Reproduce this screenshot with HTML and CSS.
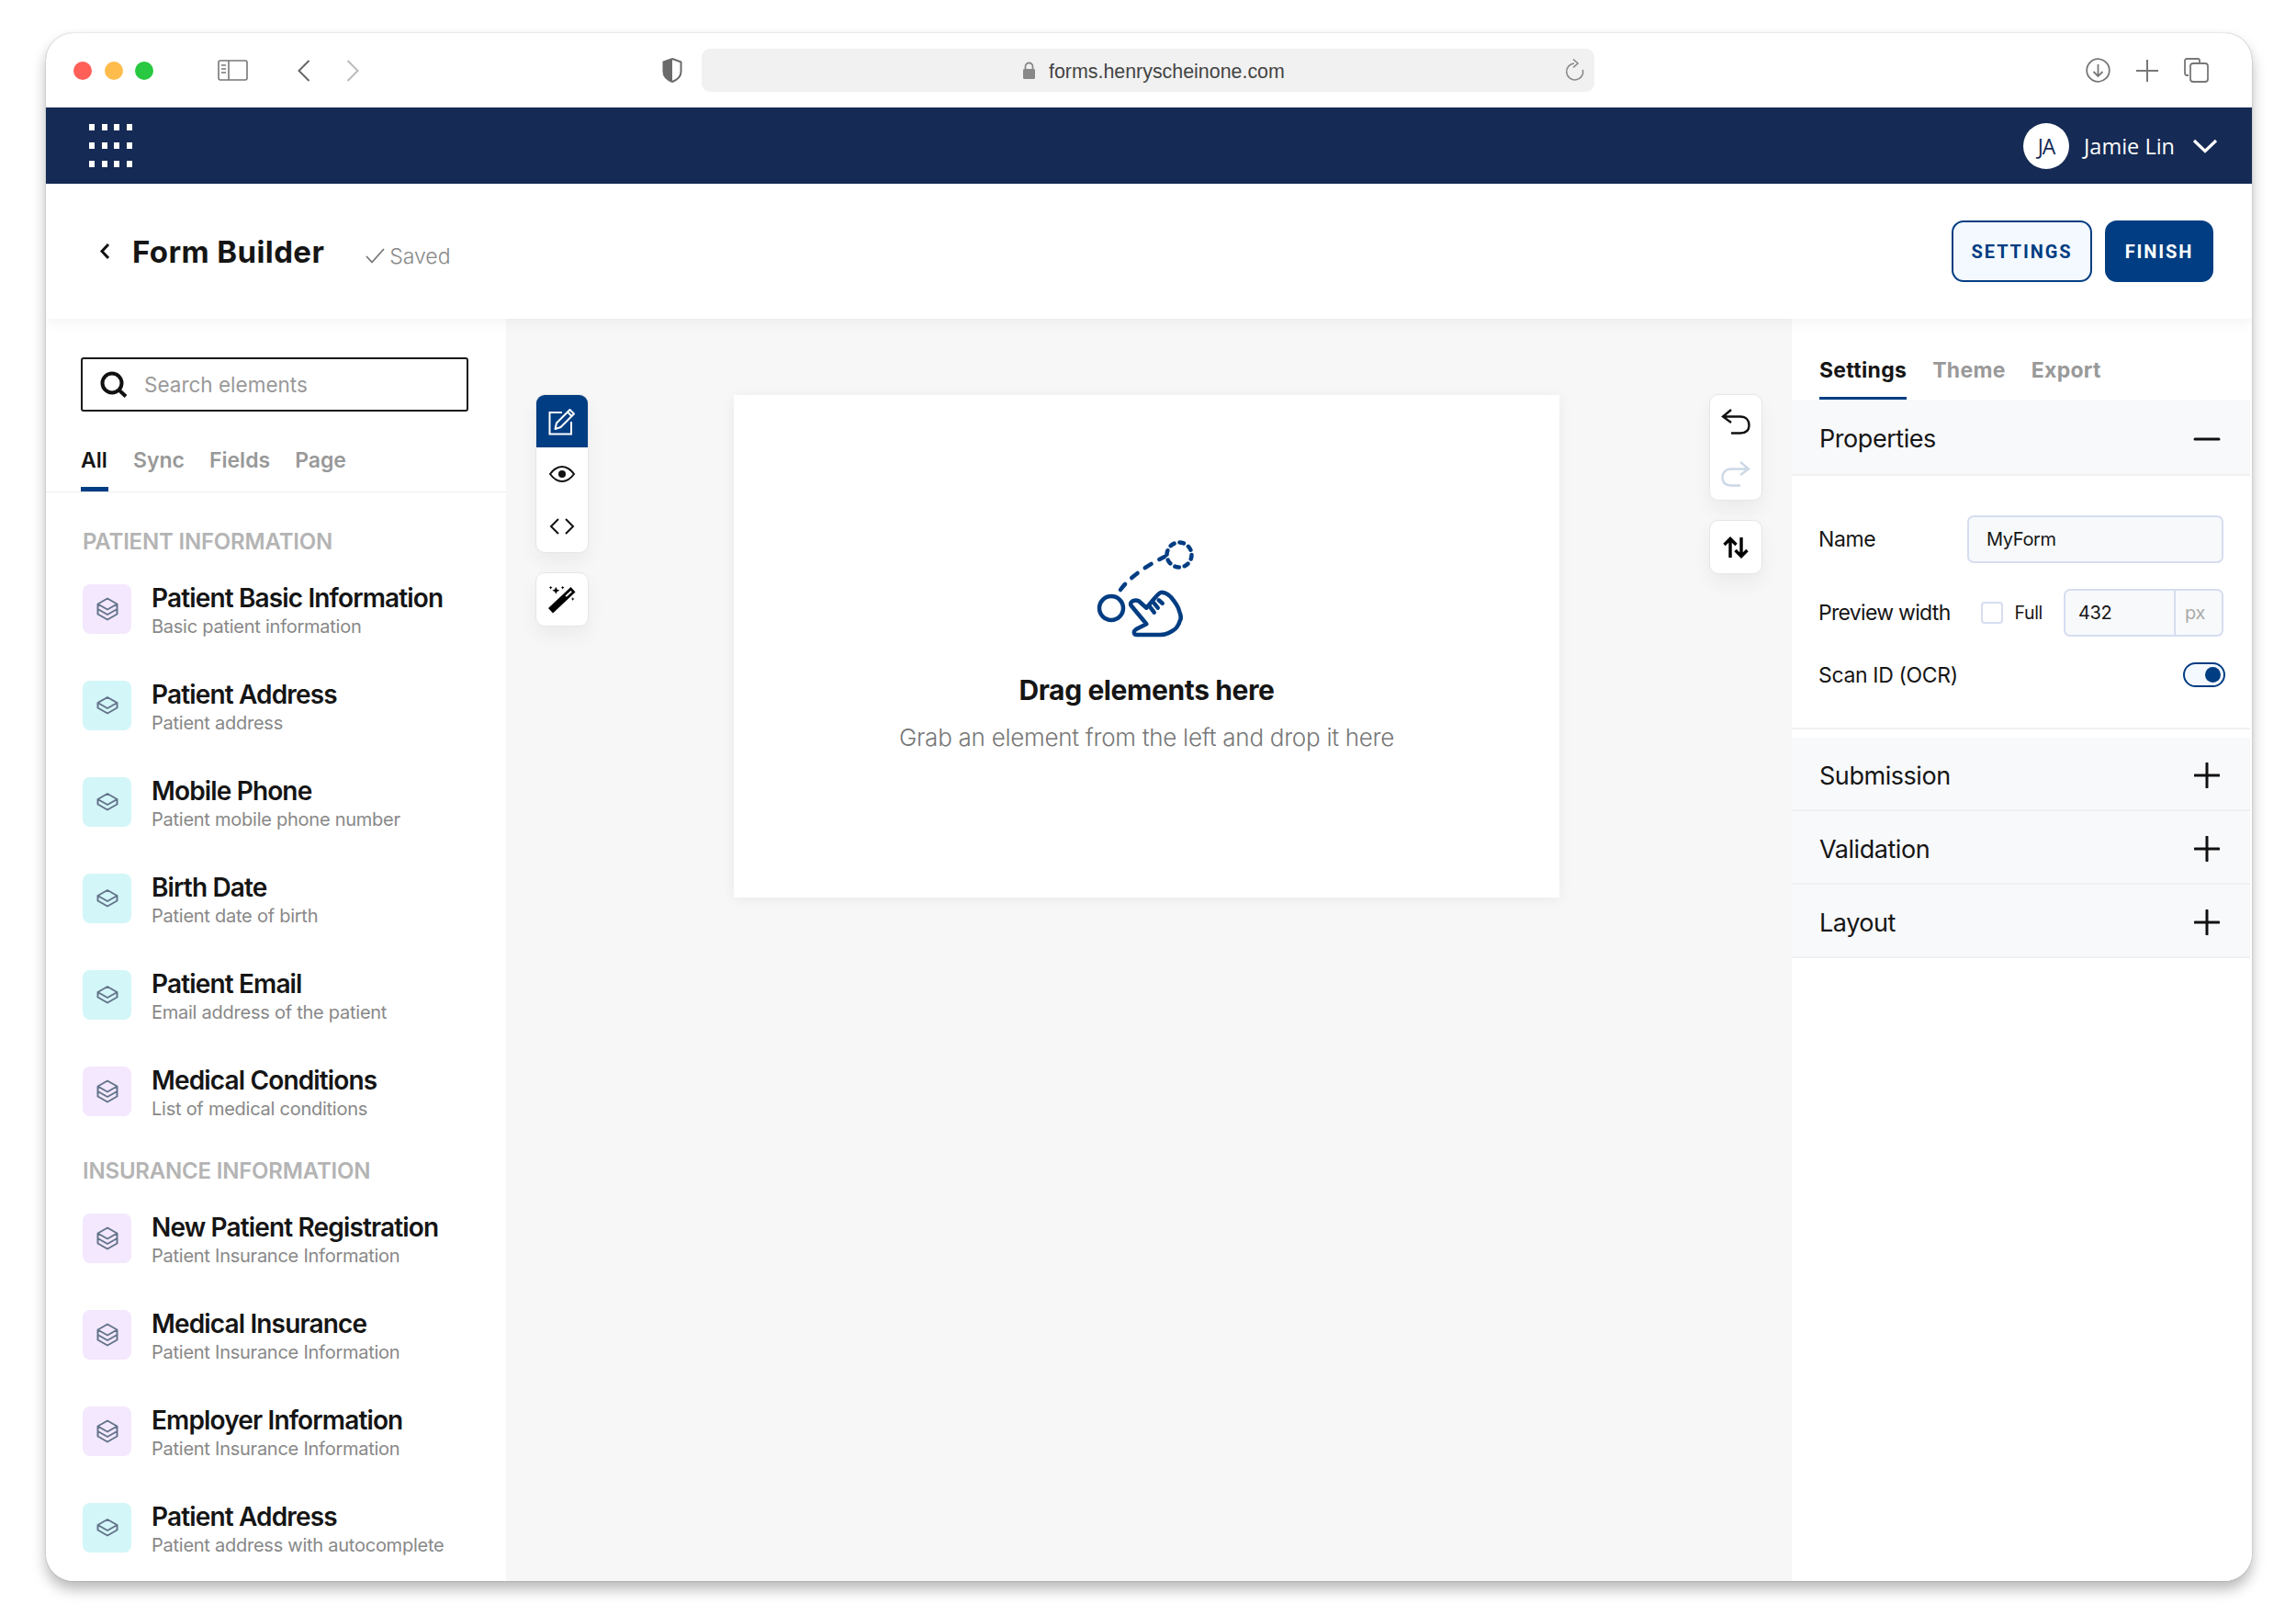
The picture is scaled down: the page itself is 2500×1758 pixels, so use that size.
FILE: index.html
```html
<!DOCTYPE html>
<html lang="en">
<head>
<meta charset="utf-8">
<title>Form Builder</title>
<link rel="stylesheet" href="styles.css">
</head>
<body>
<svg class="defs" width="0" height="0" aria-hidden="true">
  <symbol id="stack3" viewBox="0 0 24 26"><path d="M12 1.500 22.500 7.500 12 13.500 1.500 7.500Z M1.500 7.500V18.500L12 24.500 22.500 18.500V7.500 M1.500 13 12 19 22.500 13" fill="none" stroke="#64748b" stroke-width="2" stroke-linejoin="round"/></symbol>
  <symbol id="stack2" viewBox="0 0 24 26"><path d="M12 4 22.500 10 12 16 1.500 10Z M1.500 10V15.500L12 21.500 22.500 15.500V10" fill="none" stroke="#64748b" stroke-width="2" stroke-linejoin="round"/></symbol>
  <symbol id="plus" viewBox="0 0 28 28"><path d="M14 1V27M1 14H27" fill="none" stroke="#111" stroke-width="3" stroke-linecap="round"/></symbol>
</svg>
<div class="window">
  <div class="chrome">
    <div class="lights"><span class="light red"></span><span class="light amber"></span><span class="light green"></span></div>
    <svg class="ic-side" width="33" height="23" viewBox="0 0 33 23"><rect x="1" y="1" width="31" height="21" rx="2" fill="none" stroke="#777" stroke-width="1.600"/><path d="M12 1V22" stroke="#777" stroke-width="1.600"/><path d="M4 6H9M4 10H9M4 14H9" stroke="#777" stroke-width="1.600"/></svg>
    <svg class="ic-back" width="14" height="24" viewBox="0 0 14 24"><path d="M12.500 1 1.500 12 12.500 23" fill="none" stroke="#666" stroke-width="2"/></svg>
    <svg class="ic-fwd" width="14" height="24" viewBox="0 0 14 24"><path d="M1.500 1 12.500 12 1.500 23" fill="none" stroke="#bbb" stroke-width="2"/></svg>
    <svg class="ic-shield" width="22" height="27" viewBox="0 0 22 27"><path d="M11 1 20.500 4.500V15C20.500 20 16 24 11 26 6 24 1.500 20 1.500 15V4.500Z" fill="#fff" stroke="#6b6b6b" stroke-width="2"/><path d="M11 1V26C6 24 1.500 20 1.500 15V4.500Z" fill="#6b6b6b"/></svg>
    <div class="urlbar">
      <div class="url-mid">
        <svg width="15" height="19" viewBox="0 0 15 19"><path d="M3.500 9V5.500a4 4 0 0 1 8 0V9" fill="none" stroke="#888" stroke-width="1.800"/><rect x="1" y="8" width="13" height="11" rx="1.500" fill="#888"/></svg>
        <span class="url-text">forms.henryscheinone.com</span>
      </div>
      <svg class="ic-reload" width="22" height="26" viewBox="0 0 22 26"><path d="M10 5A9 9 0 1 0 19.500 12" fill="none" stroke="#888" stroke-width="1.600"/><path d="M9 0.500 14 5 9 9.500" fill="none" stroke="#888" stroke-width="1.600"/></svg>
    </div>
    <div class="chrome-right">
      <svg width="27" height="27" viewBox="0 0 27 27"><circle cx="13.500" cy="13.500" r="12.300" fill="none" stroke="#777" stroke-width="1.800"/><path d="M13.500 7V20M8.500 15 13.500 20 18.500 15" fill="none" stroke="#777" stroke-width="1.800"/></svg>
      <svg width="24" height="24" viewBox="0 0 24 24"><path d="M12 0V24M0 12H24" stroke="#777" stroke-width="2"/></svg>
      <svg width="27" height="27" viewBox="0 0 27 27"><path d="M5 19H3a2 2 0 0 1-2-2V3a2 2 0 0 1 2-2h12a2 2 0 0 1 2 2v2" fill="none" stroke="#777" stroke-width="1.800"/><rect x="7" y="6" width="19" height="20" rx="3" fill="none" stroke="#777" stroke-width="1.800"/></svg>
    </div>
  </div>

  <nav class="topnav">
    <div class="dots">
      <i></i><i></i><i></i><i></i><i></i><i></i><i></i><i></i><i></i><i></i><i></i><i></i>
    </div>
    <div class="user">
      <span class="avatar">JA</span>
      <span class="user-name">Jamie Lin</span>
      <svg width="28" height="16" viewBox="0 0 28 16"><path d="M2 2 14 13.500 26 2" fill="none" stroke="#fff" stroke-width="3.200"/></svg>
    </div>
  </nav>

  <header class="pagehead">
    <svg class="ic-headback" width="12" height="19" viewBox="0 0 12 19"><path d="M10 2 3 9.500 10 17" fill="none" stroke="#111" stroke-width="3"/></svg>
    <h1 class="page-title">Form Builder</h1>
    <span class="saved">
      <svg width="21" height="17" viewBox="0 0 21 17"><path d="M1 9 7 15.500 20 1" fill="none" stroke="#777" stroke-width="1.800"/></svg>
      Saved
    </span>
    <div class="head-actions">
      <button class="btn btn-outline">SETTINGS</button>
      <button class="btn btn-solid">FINISH</button>
    </div>
  </header>

  <main class="workspace">
    <aside class="leftpanel">
      <div class="search">
        <svg width="30" height="29" viewBox="0 0 30 29"><circle cx="13" cy="13" r="10.500" fill="none" stroke="#111" stroke-width="4"/><path d="M20.500 20.500 28 27.500" stroke="#111" stroke-width="4"/></svg>
        <span class="search-ph">Search elements</span>
      </div>
      <div class="tabs left-tabs">
        <span class="tab on tab-all">All</span><span class="tab">Sync</span><span class="tab">Fields</span><span class="tab">Page</span>
      </div>
      <section class="group">
        <h2 class="group-label">PATIENT INFORMATION</h2>
        <div class="item"><span class="chip purple"><svg width="24" height="26"><use href="#stack3"/></svg></span><div><div class="item-title">Patient Basic Information</div><div class="item-sub">Basic patient information</div></div></div>
        <div class="item"><span class="chip cyan"><svg width="24" height="26"><use href="#stack2"/></svg></span><div><div class="item-title">Patient Address</div><div class="item-sub">Patient address</div></div></div>
        <div class="item"><span class="chip cyan"><svg width="24" height="26"><use href="#stack2"/></svg></span><div><div class="item-title">Mobile Phone</div><div class="item-sub">Patient mobile phone number</div></div></div>
        <div class="item"><span class="chip cyan"><svg width="24" height="26"><use href="#stack2"/></svg></span><div><div class="item-title">Birth Date</div><div class="item-sub">Patient date of birth</div></div></div>
        <div class="item"><span class="chip cyan"><svg width="24" height="26"><use href="#stack2"/></svg></span><div><div class="item-title">Patient Email</div><div class="item-sub">Email address of the patient</div></div></div>
        <div class="item"><span class="chip purple"><svg width="24" height="26"><use href="#stack3"/></svg></span><div><div class="item-title">Medical Conditions</div><div class="item-sub">List of medical conditions</div></div></div>
      </section>
      <section class="group">
        <h2 class="group-label">INSURANCE INFORMATION</h2>
        <div class="item"><span class="chip purple"><svg width="24" height="26"><use href="#stack3"/></svg></span><div><div class="item-title">New Patient Registration</div><div class="item-sub">Patient Insurance Information</div></div></div>
        <div class="item"><span class="chip purple"><svg width="24" height="26"><use href="#stack3"/></svg></span><div><div class="item-title">Medical Insurance</div><div class="item-sub">Patient Insurance Information</div></div></div>
        <div class="item"><span class="chip purple"><svg width="24" height="26"><use href="#stack3"/></svg></span><div><div class="item-title">Employer Information</div><div class="item-sub">Patient Insurance Information</div></div></div>
        <div class="item"><span class="chip cyan"><svg width="24" height="26"><use href="#stack2"/></svg></span><div><div class="item-title">Patient Address</div><div class="item-sub">Patient address with autocomplete</div></div></div>
      </section>
    </aside>

    <section class="canvas">
      <div class="toolcol">
        <div class="toolbox">
          <span class="tool active"><svg width="30" height="30" viewBox="0 0 30 30"><path d="M15 5H1.500V28.500H25V15" fill="none" stroke="#fff" stroke-width="2"/><path d="M7.500 23 9 16.500 23.500 2 28 6.500 13.500 21Z M21 4.500 25.500 9" fill="none" stroke="#fff" stroke-width="2" stroke-linejoin="round"/></svg></span>
          <span class="tool"><svg width="28" height="18" viewBox="0 0 28 18"><path d="M1 9C5 3.500 9 1 14 1s9 2.500 13 8c-4 5.500-8 8-13 8S5 14.500 1 9Z" fill="none" stroke="#111" stroke-width="2"/><circle cx="14" cy="9" r="4" fill="#111"/></svg></span>
          <span class="tool"><svg width="28" height="18" viewBox="0 0 28 18"><path d="M10 1 2 9 10 17M18 1 26 9 18 17" fill="none" stroke="#111" stroke-width="2"/></svg></span>
        </div>
        <div class="toolbox">
          <span class="tool"><svg width="30" height="30" viewBox="0 0 30 30"><path d="M24.500 1 29.500 6.500 5 29.500 0 24Z" fill="#000"/><path d="M18.500 10.500 24.500 5 25.800 6.300 19.800 11.800Z" fill="#fff"/><path d="M8.300 .7 9.500 3.500 12.300 4.700 9.500 5.900 8.300 8.700 7.100 5.900 4.300 4.700 7.100 3.500ZM2.700 -.3 3.300 1.100 4.700 1.700 3.300 2.300 2.700 3.700 2.100 2.300 .7 1.700 2.100 1.100ZM15.700 -.3 16.300 1.100 17.700 1.700 16.300 2.300 15.700 3.700 15.100 2.300 13.700 1.700 15.100 1.100ZM26.700 12 27.300 13.400 28.700 14 27.300 14.600 26.700 16 26.100 14.600 24.700 14 26.100 13.400Z" fill="#000"/></svg></span>
        </div>
      </div>
      <div class="dropcard">
        <svg class="drag-ill" width="110" height="105" viewBox="0 0 110 105">
          <g fill="none" stroke="#003d82" stroke-width="4.500" stroke-linecap="round" stroke-linejoin="round">
            <circle cx="20" cy="72" r="13"/>
            <circle cx="94" cy="14" r="13.500" stroke-dasharray="4.600 6"/>
            <path d="M30 52C40 38 60 25 78 16" stroke-dasharray="8 10"/>
            <path d="M41.700 69.300C39 65 46 62 50 64.300L58.300 71.700L66.700 61.700C70 58 73 54 76 55C80 55 83 58 85 60C90 66 93 70 94 75C96 80 96 84 95 85C93 92 90 95 86.700 96.700C82 100 78 101 73.300 101H48C44 101 44 97 47 95L58.300 89.300Z"/>
            <path d="M61.700 70 66.700 76.700M66.700 66.700 70.700 71.700M71.700 63.300 75.700 66.700"/>
          </g>
        </svg>
        <h3 class="drop-title">Drag elements here</h3>
        <p class="drop-sub">Grab an element from the left and drop it here</p>
      </div>
      <div class="toolcol">
        <div class="toolbox">
          <span class="tool"><svg width="32" height="28" viewBox="0 0 32 28"><path d="M11 1 2 8.500 11 15M3 8.500H21C27 8.500 30.500 12.500 30.500 18S27 26.500 21 26.500H11" fill="none" stroke="#111" stroke-width="2.400"/></svg></span>
          <span class="tool"><svg width="32" height="28" viewBox="0 0 32 28"><path d="M21 1 30 8.500 21 15M29 8.500H11C5 8.500 1.500 12.500 1.500 18S5 26.500 11 26.500H21" fill="none" stroke="#ccd8e6" stroke-width="2.400"/></svg></span>
        </div>
        <div class="toolbox">
          <span class="tool"><svg width="28" height="24" viewBox="0 0 28 24"><path d="M8 23V3M1.500 9 8 2.500 14.500 9M20 1V21M13.500 15 20 21.500 26.500 15" fill="none" stroke="#000" stroke-width="3.400"/></svg></span>
        </div>
      </div>
    </section>

    <aside class="rightpanel">
      <div class="tabs right-tabs">
        <span class="tab on tab-r">Settings</span><span class="tab tab-r">Theme</span><span class="tab tab-r">Export</span>
      </div>
      <div class="band band-open"><span>Properties</span><svg width="28" height="4" viewBox="0 0 28 4"><path d="M1 2H27" stroke="#111" stroke-width="3" stroke-linecap="round"/></svg></div>
      <div class="props">
        <div class="prop">
          <span class="prop-label">Name</span>
          <div class="field field-name">MyForm</div>
        </div>
        <div class="prop">
          <span class="prop-label prop-label-tight">Preview width</span>
          <span class="check"></span>
          <span class="full">Full</span>
          <div class="field field-num"><span class="num">432</span><span class="unit">px</span></div>
        </div>
        <div class="prop prop-scan">
          <span class="prop-label">Scan ID (OCR)</span>
          <span class="toggle"><i></i></span>
        </div>
      </div>
      <div class="band band-first"><span>Submission</span><svg width="28" height="28"><use href="#plus"/></svg></div>
      <div class="band"><span>Validation</span><svg width="28" height="28"><use href="#plus"/></svg></div>
      <div class="band"><span>Layout</span><svg width="28" height="28"><use href="#plus"/></svg></div>
    </aside>
  </main>
</div>
</body>
</html>
```
FILE: styles.css
```css
* { box-sizing: border-box; }
html, body { margin: 0; padding: 0; background: #fff; }
body { padding: 36px 48px 0 50px; height: 1758px; overflow: hidden; font-family: "Inter", "Liberation Sans", sans-serif; color: #151515; }
.defs { position: absolute; }
svg { display: block; flex: none; overflow: visible; }

.window { width: 2402px; height: 1685px; border-radius: 30px; overflow: hidden; background: #fff; display: flex; flex-direction: column; box-shadow: 0 9px 15px rgba(0,0,0,.28), 0 0 1.500px rgba(0,0,0,.35); }

.chrome { height: 81px; flex: none; display: flex; align-items: center; padding-left: 30px; }
.lights { display: flex; gap: 13.500px; }
.light { width: 20px; height: 20px; border-radius: 50%; }
.red { background: #ff5f57; }
.amber { background: #febc4c; }
.green { background: #28c840; }
.ic-side { margin-left: 70px; }
.ic-back { margin-left: 54px; }
.ic-fwd { margin-left: 39px; }
.ic-shield { margin-left: 330px; }
.urlbar { width: 972px; height: 47px; margin-left: 21px; background: #f1f1f1; border-radius: 9px; display: flex; align-items: center; position: relative; padding-left: 349px; }
.url-mid { display: flex; align-items: center; gap: 14px; }
.url-text { font: 21.400px "Liberation Sans", sans-serif; color: #444; padding-top: 3px; }
.ic-reload { position: absolute; right: 10px; top: 11px; }
.chrome-right { margin-left: 535px; display: flex; align-items: center; gap: 28px; }

.topnav { height: 83px; flex: none; background: #152a54; display: flex; align-items: center; justify-content: space-between; padding: 0 37px 0 47px; }
.dots { display: grid; grid-template-columns: repeat(4, 6px); gap: 13px 7.500px; }
.dots i { height: 7px; background: #fff; }
.user { display: flex; align-items: center; }
.avatar { width: 50px; height: 50px; border-radius: 50%; background: #fff; color: #152a54; font: 400 23px "Open Sans", sans-serif; letter-spacing: -1px; display: flex; align-items: center; justify-content: center; }
.user-name { font: 400 23.500px "Open Sans", sans-serif; color: #fff; margin: 0 19px 0 16px; }

.pagehead { height: 147px; flex: none; display: flex; align-items: center; padding: 0 42px 0 58px; background: #fff; position: relative; z-index: 2; box-shadow: 0 4px 14px rgba(0,0,0,.05); }
.page-title { font-size: 33px; font-weight: 700; margin: 0 0 0 24px; letter-spacing: .4px; }
.saved { display: flex; align-items: center; gap: 5px; margin: 10px 0 0 45px; font-size: 23px; font-weight: 300; color: #888; }
.head-actions { margin-left: auto; display: flex; gap: 14px; }
.btn { height: 67px; border-radius: 13px; font: 700 20px "Roboto", sans-serif; letter-spacing: 1.900px; padding: 0; }
.btn-outline { width: 153px; background: #f4f9ff; border: 2px solid #003d82; color: #003d82; }
.btn-solid { width: 118px; background: #003d82; border: 0; color: #fff; }

.workspace { flex: 1; display: flex; min-height: 0; }
.leftpanel { width: 501px; flex: none; background: #fff; overflow: hidden; padding-top: 42px; }
.search { height: 59px; width: 422px; margin-left: 38px; border: 2px solid #1a1a1a; border-radius: 3px; display: flex; align-items: center; gap: 18px; padding-left: 19px; }
.search-ph { font-size: 22.500px; color: #999; }
.tabs { display: flex; }
.tab { font-size: 23px; font-weight: 600; color: #999; line-height: 30px; padding-bottom: 14px; border-bottom: 5px solid transparent; }
.tab.on { color: #151515; border-bottom-color: #003d82; }
.left-tabs { margin-top: 38px; padding-left: 38px; gap: 27px; border-bottom: 1px solid #eee; height: 50px; }
.tab-all { width: 30px; }
.group { padding-left: 40px; display: flex; flex-direction: column; gap: 51px; margin-bottom: 45px; }
.group:first-of-type { margin-top: 39px; }
.group-label { margin: 0 0 -20px; height: 30px; font-size: 24px; line-height: 30px; font-weight: 600; color: #b4b4b4; letter-spacing: -.2px; }
.item { display: flex; gap: 22px; height: 54px; }
.chip { width: 53px; height: 54px; border-radius: 8px; display: flex; align-items: center; justify-content: center; flex: none; }
.purple { background: #f3e8fe; }
.cyan { background: #d3f6f8; }
.item-title { font-size: 28px; font-weight: 600; line-height: 30px; letter-spacing: -.85px; color: #151515; white-space: nowrap; }
.item-sub { font-size: 20px; line-height: 24px; margin-top: 4px; color: #888; white-space: nowrap; letter-spacing: -.25px; }

.canvas { flex: 1; min-width: 0; background: #f7f7f7; display: flex; padding: 82px 32px 0; }
.toolcol { width: 58px; flex: none; display: flex; flex-direction: column; gap: 21px; }
.toolbox { background: #fff; border: 1px solid #e6e6e6; border-radius: 10px; overflow: hidden; box-shadow: 0 10px 20px rgba(0,0,0,.05); }
.tool { height: 57px; width: 100%; display: flex; align-items: center; justify-content: center; }
.tool.active { background: #003d82; }
.dropcard { width: 899px; height: 547px; margin: 1px auto 0 158px; background: #fff; box-shadow: 0 2px 14px rgba(0,0,0,.06); display: flex; flex-direction: column; align-items: center; padding-top: 160px; }
.drag-ill { margin-left: -7px; }
.drop-title { margin: 38px 0 0; font-size: 30px; line-height: 36px; font-weight: 700; letter-spacing: -.4px; }
.drop-sub { margin: 16px 0 0; font-size: 26px; line-height: 36px; font-weight: 300; color: #777; letter-spacing: -.27px; }

.rightpanel { width: 501px; flex: none; background: #fff; padding-top: 41px; }
.right-tabs { padding-left: 30px; gap: 28px; }
.tab-r { letter-spacing: .3px; font-weight: 700; padding-bottom: 14px; border-bottom-width: 3px; }
.band { height: 80px; display: flex; align-items: center; justify-content: space-between; padding: 4px 33px 0 30px; background: #f8f9fb; border-bottom: 2px solid #f0f0f0; font-size: 27px; font-weight: 400; margin-right: 2px; letter-spacing: -.45px; }
.band-open { height: 83px; }
.band-first { margin-top: 9px; }
.props { height: 276px; padding: 43px 29px 0 29px; border-bottom: 2px solid #f0f0f0; margin-right: 2px; }
.prop { display: flex; align-items: center; height: 52px; margin-bottom: 28px; font-size: 23px; letter-spacing: -.35px; }
.prop-scan { height: 27px; margin: 3px 0 0; justify-content: space-between; }
.prop-label { white-space: nowrap; }
.prop-label-tight { letter-spacing: -.7px; }
.field { height: 52px; background: #f8f9fb; border: 2px solid #d6ddf0; border-radius: 7px; font-size: 20px; display: flex; align-items: center; }
.field-name { width: 279px; margin-left: auto; padding-left: 19px; }
.check { width: 24px; height: 24px; border: 2px solid #d6ddf0; border-radius: 4px; margin-left: 33px; background: #fff; }
.full { font-size: 19.500px; margin-left: 13px; }
.field-num { width: 174px; margin-left: auto; }
.num { width: 118px; padding-left: 14px; }
.unit { flex: 1; height: 100%; border-left: 2px solid #d6ddf0; color: #aaa; display: flex; align-items: center; padding-left: 10px; }
.toggle { width: 46px; height: 27px; border: 2px solid #003d82; border-radius: 14px; background: #f4f9ff; display: flex; align-items: center; justify-content: flex-end; padding-right: 3px; margin-right: -2px; }
.toggle i { width: 17px; height: 17px; border-radius: 50%; background: #003d82; }
```
